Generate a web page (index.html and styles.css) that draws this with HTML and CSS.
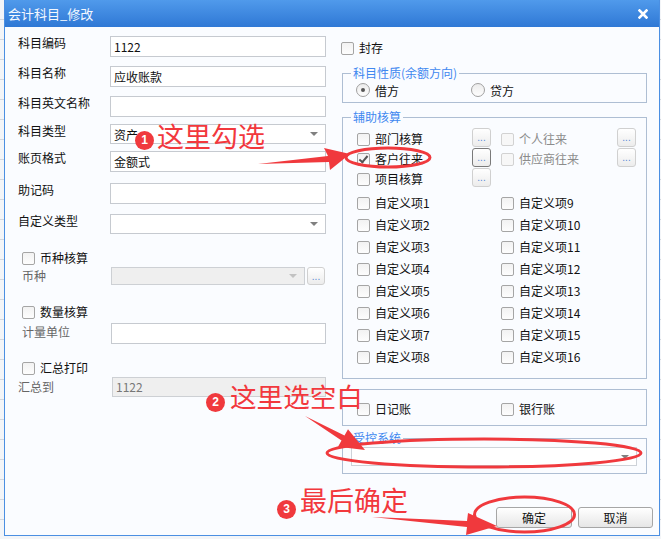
FILE: index.html
```html
<!DOCTYPE html>
<html lang="zh-CN">
<head>
    <meta charset="UTF-8">
    <meta name="viewport" content="width=device-width, initial-scale=1.0">
    <title>会计科目_修改</title>
    <link rel="stylesheet" href="styles.css">
</head>
<body>
<div class="desk">
    <div class="window">
        <div class="titlebar">
            <span class="title">会计科目_修改</span>
            <svg class="close" width="10" height="10" viewBox="0 0 10 10">
                <path d="M1.5 1.5 L8.5 8.5 M8.5 1.5 L1.5 8.5" stroke="#fff" stroke-width="2.6" stroke-linecap="square"/>
            </svg>
        </div>

        <div class="content">
            <!-- 左侧：基本信息 -->
            <div class="left">
                <div class="label">科目编码</div>
                <div class="input">1122</div>

                <div class="label">科目名称</div>
                <div class="input">应收账款</div>

                <div class="label">科目英文名称</div>
                <div class="input"></div>

                <div class="label">科目类型</div>
                <div class="input select"><span>资产</span><i class="caret"></i></div>

                <div class="label">账页格式</div>
                <div class="input">金额式</div>

                <div class="label">助记码</div>
                <div class="input"></div>

                <div class="label">自定义类型</div>
                <div class="input select"><span></span><i class="caret"></i></div>

                <div class="check wide"><span class="cb"></span>币种核算</div>

                <div class="label sub">币种</div>
                <div class="combo">
                    <div class="input select disabled"><span></span><i class="caret"></i></div>
                    <span class="more">...</span>
                </div>

                <div class="check wide"><span class="cb"></span>数量核算</div>

                <div class="label sub">计量单位</div>
                <div class="input shift"></div>

                <div class="check wide"><span class="cb"></span>汇总打印</div>

                <div class="label gray">汇总到</div>
                <div class="input disabled shift2">1122</div>
            </div>

            <!-- 右侧：属性 -->
            <div class="right">
                <div class="check"><span class="cb"></span>封存</div>

                <fieldset class="group dir">
                    <legend>科目性质(余额方向)</legend>
                    <div class="radios">
                        <div class="radio-item"><span class="rb on"></span>借方</div>
                        <div class="radio-item"><span class="rb"></span>贷方</div>
                    </div>
                </fieldset>

                <fieldset class="group aux">
                    <legend>辅助核算</legend>
                    <div class="aux-top">
                        <div class="check"><span class="cb"></span>部门核算<span class="more">...</span></div>
                        <div class="check off"><span class="cb"></span>个人往来<span class="more">...</span></div>
                        <div class="check"><span class="cb checked"></span>客户往来<span class="more focus">...</span></div>
                        <div class="check off"><span class="cb"></span>供应商往来<span class="more">...</span></div>
                        <div class="check"><span class="cb"></span>项目核算<span class="more">...</span></div>
                    </div>
                    <div class="aux-custom">
                        <div class="check"><span class="cb"></span>自定义项1</div>
                        <div class="check"><span class="cb"></span>自定义项9</div>
                        <div class="check"><span class="cb"></span>自定义项2</div>
                        <div class="check"><span class="cb"></span>自定义项10</div>
                        <div class="check"><span class="cb"></span>自定义项3</div>
                        <div class="check"><span class="cb"></span>自定义项11</div>
                        <div class="check"><span class="cb"></span>自定义项4</div>
                        <div class="check"><span class="cb"></span>自定义项12</div>
                        <div class="check"><span class="cb"></span>自定义项5</div>
                        <div class="check"><span class="cb"></span>自定义项13</div>
                        <div class="check"><span class="cb"></span>自定义项6</div>
                        <div class="check"><span class="cb"></span>自定义项14</div>
                        <div class="check"><span class="cb"></span>自定义项7</div>
                        <div class="check"><span class="cb"></span>自定义项15</div>
                        <div class="check"><span class="cb"></span>自定义项8</div>
                        <div class="check"><span class="cb"></span>自定义项16</div>
                    </div>
                </fieldset>

                <fieldset class="group books">
                    <div class="pair">
                        <div class="check"><span class="cb"></span>日记账</div>
                        <div class="check"><span class="cb"></span>银行账</div>
                    </div>
                </fieldset>

                <fieldset class="group ctrl">
                    <legend>受控系统</legend>
                    <div class="input select ctrl-select"><span></span><i class="caret"></i></div>
                </fieldset>
            </div>
        </div>

        <div class="footer">
            <button class="btn ok">确定</button>
            <button class="btn">取消</button>
        </div>
    </div>

    <!-- 标注 -->
    <div class="marks">
        <svg class="ink" width="661" height="539" viewBox="0 0 661 539">
            <ellipse cx="388" cy="157.5" rx="42" ry="9.5" fill="none" stroke="#f0393d" stroke-width="3"/>
            <polygon points="258,164 328,156 324,148 350,154 330,170 329,162" fill="#f0393d"/>
            <ellipse cx="484" cy="453" rx="157" ry="14" fill="none" stroke="#f0393d" stroke-width="3"/>
            <polygon points="305,416 344.5,435.4 348,429.3 365,450 338,446.7 341.5,440.6" fill="#f0393d"/>
            <ellipse cx="524.5" cy="514.5" rx="50" ry="17.5" fill="none" stroke="#f0393d" stroke-width="3"/>
            <polygon points="372,517 467,521 468,513 497,526 466,535 467,527" fill="#f0393d"/>
        </svg>
        <span class="badge b1">1</span>
        <span class="note n1">这里勾选</span>
        <span class="badge b2">2</span>
        <span class="note n2">这里选空白</span>
        <span class="badge b3">3</span>
        <span class="note n3">最后确定</span>
    </div>
</div>
</body>
</html>
```

FILE: styles.css
```css
body {
    margin: 0;
    font-family: "Noto Sans CJK SC", "Liberation Sans", sans-serif;
    font-size: 12px;
    color: #111;
}

.desk {
    position: relative;
    width: 661px;
    height: 539px;
    overflow: hidden;
    background-color: #f3f5f8;
    background-image: repeating-linear-gradient(to bottom, transparent 0, transparent 19px, #d3d7dd 19px, #d3d7dd 20px);
}

.window {
    margin-left: 4px;
    width: 656px;
    height: 536px;
    box-sizing: border-box;
    border: 1px solid #4b8fe2;
    border-top: none;
    background: #fafcff;
    display: flex;
    flex-direction: column;
}

.titlebar {
    height: 27px;
    flex: none;
    display: flex;
    align-items: center;
    justify-content: space-between;
    padding: 0 11px 0 3px;
    background: linear-gradient(#509aeb, #2f78d5);
}

.title {
    color: #f4f8ff;
    font-size: 13px;
    line-height: 14px;
}

.content {
    display: flex;
}

/* 左侧 */
.left {
    width: 328px;
    box-sizing: border-box;
    padding: 9px 0 0 13px;
    display: grid;
    grid-template-columns: 92px 216px;
    grid-template-rows: 30px 30px 28px 27px 32px 31px 34px 19px 35px 21px 35px 19px auto;
    align-items: start;
    align-content: start;
}

.label {
    line-height: 14px;
}

.label.sub {
    padding-left: 4px;
    margin-top: 2px;
    color: #666;
}

.label.gray {
    margin-top: 3px;
    color: #666;
}

.input {
    height: 21px;
    box-sizing: border-box;
    border: 1px solid #c6cad0;
    background: #fff;
    padding: 0 3px;
    line-height: 19px;
    white-space: nowrap;
    overflow: hidden;
}

.input.shift {
    margin-left: 1px;
}

.input.shift2 {
    margin-left: 2px;
    height: 20px;
    line-height: 18px;
}

.input.disabled {
    background: #efefef;
    color: #777;
    border-color: #cdd0d4;
}

.select {
    display: flex;
    align-items: center;
    justify-content: space-between;
    height: 20px;
    padding-right: 7px;
}

.caret {
    width: 0;
    height: 0;
    border-left: 4px solid transparent;
    border-right: 4px solid transparent;
    border-top: 4px solid #808080;
}

.disabled .caret {
    border-top-color: #c2c2c2;
}

.combo {
    display: flex;
    gap: 2px;
    margin-left: 1px;
}

.combo .select {
    width: 194px;
    height: 18px;
}

.combo .more {
    width: 18px;
    height: 18px;
}

/* 复选框 / 单选框 */
.check {
    display: flex;
    align-items: center;
    gap: 5px;
    height: 16px;
    line-height: 14px;
    white-space: nowrap;
}

.check.wide {
    grid-column: 1 / 3;
    padding-left: 4px;
    margin-top: 2px;
}

.cb {
    width: 13px;
    height: 13px;
    flex: none;
    box-sizing: border-box;
    border: 1px solid #a5a5a5;
    border-radius: 2px;
    background: linear-gradient(#f2f2f2, #fdfdfd);
    position: relative;
}

.cb.checked::after {
    content: "";
    position: absolute;
    left: 3px;
    top: 0;
    width: 3px;
    height: 7px;
    border-right: 2px solid #555;
    border-bottom: 2px solid #555;
    transform: rotate(40deg);
}

.check.off {
    color: #8c8c8c;
}

.check.off .cb {
    border-color: #d2d2d2;
    background: #f7f7f7;
}

.rb {
    width: 14px;
    height: 14px;
    flex: none;
    box-sizing: border-box;
    border: 1px solid #a0a0a0;
    border-radius: 50%;
    background: linear-gradient(#ececec, #fdfdfd);
    display: flex;
    align-items: center;
    justify-content: center;
}

.rb.on::after {
    content: "";
    width: 4px;
    height: 4px;
    border-radius: 50%;
    background: #555;
}

.more {
    width: 19px;
    height: 19px;
    flex: none;
    box-sizing: border-box;
    border: 1px solid #d0d0d0;
    border-radius: 3px;
    background: linear-gradient(#ffffff, #ececec);
    color: #5a8ad6;
    font-size: 10px;
    line-height: 17px;
    text-align: center;
    font-family: "Liberation Sans", sans-serif;
}

.more.focus {
    border-color: #7a7a7a;
}

.check .more {
    margin-left: auto;
}

/* 右侧 */
.right {
    flex: 1;
    padding: 13px 0 0 9px;
}

.right > .check {
    margin-left: -1px;
}

.group {
    margin: 0;
    width: 305px;
    min-width: 0;
    box-sizing: border-box;
    border: 1px solid #aebed3;
    padding: 0;
}

.group legend {
    margin-left: 8px;
    padding: 0 2px;
    line-height: 14px;
    color: #3f88f0;
}

.dir {
    margin-top: 10px;
    padding: 2px 0 4px;
}

.radios {
    display: flex;
    padding-left: 13px;
}

.radio-item {
    width: 115px;
    height: 16px;
    display: flex;
    align-items: center;
    gap: 5px;
}

.aux {
    margin-top: 7px;
    padding: 4px 0 10px;
}

.aux-top,
.aux-custom,
.pair {
    display: grid;
    grid-template-columns: 134px 135px;
    column-gap: 10px;
    padding-left: 14px;
}

.aux-top {
    grid-auto-rows: 20px;
}

.aux-top .check {
    height: 20px;
    align-items: flex-start;
}

.aux-top .cb {
    margin-top: 5px;
}

.aux-top .check {
    line-height: 22px;
}

.aux-custom {
    margin-top: 4px;
    grid-auto-rows: 22px;
}

.aux-custom .check {
    height: 22px;
}

.books {
    margin-top: 10px;
    padding: 11px 0 8px;
}

.ctrl {
    margin-top: 5px;
    padding: 2px 0 7px;
}

.ctrl-select {
    margin-left: 8px;
    width: 286px;
    height: 19px;
    border-color: #cdd2d8;
}

/* 底部按钮 */
.footer {
    margin-top: auto;
    display: flex;
    justify-content: flex-end;
    gap: 6px;
    padding: 0 6px 7px 0;
}

.btn {
    width: 75px;
    height: 21px;
    padding: 0;
    border: 1px solid #a6a6a6;
    border-radius: 3px;
    background: linear-gradient(#ffffff, #e6e6e6);
    font-family: "Noto Sans CJK SC", sans-serif;
    font-size: 12px;
    line-height: 18px;
    color: #111;
}

.btn.ok {
    width: 76px;
}

/* 标注层 */
.marks {
    position: absolute;
    left: 0;
    top: 0;
    width: 661px;
    height: 539px;
    pointer-events: none;
}

.ink {
    position: absolute;
    left: 0;
    top: 0;
}

.badge {
    position: absolute;
    width: 19px;
    height: 19px;
    border-radius: 50%;
    background: #f0393d;
    color: #fff;
    font-family: "Liberation Sans", sans-serif;
    font-weight: bold;
    font-size: 12px;
    line-height: 19px;
    text-align: center;
}

.b1 { left: 135px; top: 131px; }
.b2 { left: 206px; top: 393px; }
.b3 { left: 277px; top: 500px; }

.note {
    position: absolute;
    color: #f2383d;
    font-size: 27px;
    line-height: 27px;
    white-space: nowrap;
}

.n1 { left: 157px; top: 122px; }
.n2 { left: 230px; top: 382px; font-size: 26.6px; }
.n3 { left: 300px; top: 486px; }
```
